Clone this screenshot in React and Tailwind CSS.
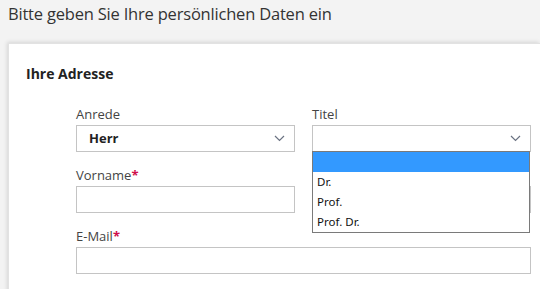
import React from 'react';

function Chevron() {
    return (
        <svg width="11" height="7" viewBox="0 0 11 7" className="text-gray-500">
            <path d="M1 1l4.5 4.5L10 1" fill="none" stroke="currentColor" strokeWidth="1.2" />
        </svg>
    );
}

function Label({ children, required }) {
    return (
        <div className="h-[20px] text-[13px] leading-[18px] text-[#444]">
            {children}
            {required && <span className="text-[#d0104c] font-bold">*</span>}
        </div>
    );
}

export default function App() {
    const font = { fontFamily: '"Open Sans", "Noto Sans", sans-serif' };
    return (
        <div className="w-[540px] h-[289px] overflow-hidden bg-[#f3f3f3] pl-[8px]" style={font}>
            <h1 className="pt-[2px] text-[16.5px] leading-[24px] text-[#333] tracking-[-0.2px]">
                Bitte geben Sie Ihre persönlichen Daten ein
            </h1>

            <div className="mt-[17px] bg-white h-[260px] border-l border-t border-[#e2e2e2] shadow-[-1px_-1px_4px_rgba(0,0,0,0.12)] pt-[20px]">
                <h2 className="pl-[17px] text-[14px] leading-[20px] font-bold text-[#222]">Ihre Adresse</h2>

                <div className="ml-[67px] mt-[21px] w-[455px] grid grid-cols-[219px_219px] gap-x-[17px]">
                    {/* Anrede */}
                    <div className="mb-[14px]">
                        <Label>Anrede</Label>
                        <div className="h-[27px] border border-[#c4c4c4] flex items-center justify-between pl-[12px] pr-[9px]">
                            <span className="text-[13px] font-bold text-[#222]">Herr</span>
                            <Chevron />
                        </div>
                    </div>

                    {/* Titel + open list */}
                    <div className="mb-[14px] relative">
                        <Label>Titel</Label>
                        <div className="h-[27px] border border-[#c4c4c4] flex items-center justify-end pr-[9px]">
                            <Chevron />
                        </div>
                        <div
                            className="absolute left-0 top-[46px] w-[218px] h-[82px] bg-white border border-[#7a7a7a] z-10 text-[11.5px] text-[#111]"
                            style={{ fontFamily: '"Noto Sans", "DejaVu Sans", sans-serif' }}
                        >
                            <div className="h-[20px] bg-[#3399ff]" />
                            <div className="h-[20px] leading-[20px] pl-[4px]">Dr.</div>
                            <div className="h-[20px] leading-[20px] pl-[4px]">Prof.</div>
                            <div className="h-[20px] leading-[20px] pl-[4px]">Prof. Dr.</div>
                        </div>
                    </div>

                    {/* Vorname */}
                    <div className="mb-[14px]">
                        <Label required>Vorname</Label>
                        <div className="h-[27px] border border-[#c4c4c4]" />
                    </div>

                    {/* field covered by the open list */}
                    <div className="mb-[14px]">
                        <div className="h-[20px]" />
                        <div className="h-[27px] border border-[#c4c4c4]" />
                    </div>

                    {/* E-Mail */}
                    <div className="col-span-2">
                        <Label required>E-Mail</Label>
                        <div className="h-[27px] border border-[#c4c4c4]" />
                    </div>
                </div>
            </div>
        </div>
    );
}
